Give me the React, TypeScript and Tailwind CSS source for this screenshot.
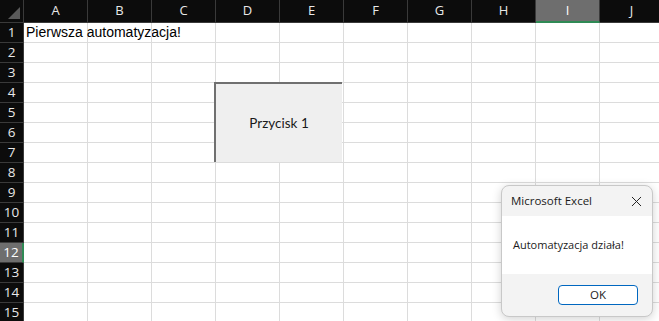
import { X } from "lucide-react";

const cols = ["A", "B", "C", "D", "E", "F", "G", "H", "I", "J"];
const rows = Array.from({ length: 15 }, (_, i) => i + 1);

export default function App() {
  return (
    <div className="relative h-[321px] w-[659px] overflow-hidden bg-white font-['Open_Sans',sans-serif]">
      <div className="grid grid-cols-[24px_repeat(10,64px)] grid-rows-[23px_repeat(15,20px)]">
        {/* corner */}
        <div className="relative border-b border-r border-[#3a3a3a] bg-[#0c0c0c]">
          <div className="absolute bottom-[3px] right-[3px] h-0 w-0 border-b-[12px] border-l-[12px] border-b-[#5a5a5a] border-l-transparent" />
        </div>
        {cols.map((c) =>
          c === "I" ? (
            <div
              key={c}
              className="flex items-center justify-center border-b-2 border-r border-b-[#2f8a55] border-r-[#3a3a3a] bg-[#6e6e6e] text-[13px] text-white"
            >
              {c}
            </div>
          ) : (
            <div
              key={c}
              className="flex items-center justify-center border-b border-r border-[#3a3a3a] bg-[#0c0c0c] text-[13px] text-[#e8e8e8]"
            >
              {c}
            </div>
          ),
        )}
        {rows.map((r) => (
          <div key={r} className="contents">
            {r === 12 ? (
              <div className="flex items-center justify-center border-b border-r-2 border-b-[#3a3a3a] border-r-[#2f8a55] bg-[#6e6e6e] text-[13.5px] text-white">
                {r}
              </div>
            ) : (
              <div className="flex items-center justify-center border-b border-r border-[#3a3a3a] bg-[#0c0c0c] text-[13.5px] text-[#e8e8e8]">
                {r}
              </div>
            )}
            {cols.map((c) => (
              <div
                key={c}
                className="relative border-b border-r border-[#dcdcdc]"
              >
                {r === 1 && c === "A" && (
                  <span className="absolute left-[2px] top-[0px] whitespace-nowrap font-['Liberation_Sans',sans-serif] text-[14px] leading-[19px] text-black">
                    Pierwsza automatyzacja!
                  </span>
                )}
              </div>
            ))}
          </div>
        ))}
      </div>

      {/* form button over the sheet */}
      <div className="absolute left-[214px] top-[82px] flex h-[80px] w-[128px] items-center justify-center border-l-2 border-t-2 border-[#707070] bg-[#efefef] font-['Lato',sans-serif] text-[13.5px] text-[#1a1a1a]">
        Przycisk 1
      </div>

      {/* message box */}
      <div className="absolute left-[501px] top-[185px] flex h-[132px] w-[152px] flex-col overflow-hidden rounded-[8px] border border-[#c8c8c8] bg-[#f3f3f3] shadow-[0_2px_10px_rgba(0,0,0,0.18)]">
        <div className="flex h-[30px] items-center justify-between pl-[9px] pr-[7px] text-[11.5px] text-[#1b1b1b]">
          <span>Microsoft Excel</span>
          <X className="h-[17px] w-[17px] text-[#222]" strokeWidth={1.4} />
        </div>
        <div className="flex h-[58px] items-center bg-white pl-[11px] text-[11px] text-[#1b1b1b]">
          Automatyzacja działa!
        </div>
        <div className="flex flex-1 items-start justify-end pr-[14px] pt-[11px]">
          <div className="flex h-[20px] w-[80px] items-center justify-center rounded-[4px] border border-[#0067c0] bg-white text-[11.5px] text-[#1b1b1b]">
            OK
          </div>
        </div>
      </div>
    </div>
  );
}
